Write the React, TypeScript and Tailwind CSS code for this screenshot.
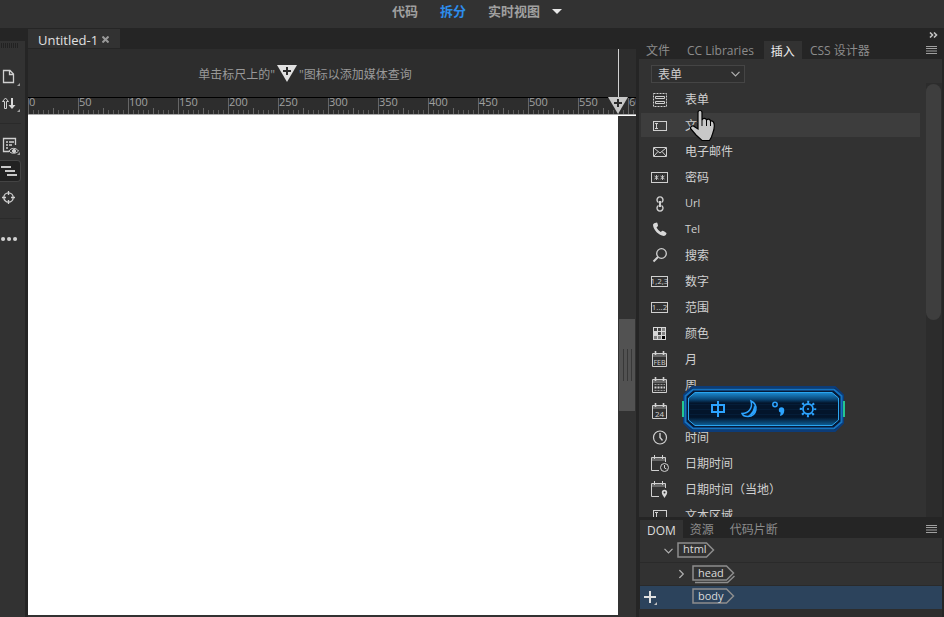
import type { ReactNode } from "react";

const Svg = ({ w = 24, h = 24, children }: { w?: number; h?: number; children: ReactNode }) => (
  <svg width={w} height={h} viewBox={`0 0 ${w} ${h}`} fill="none" stroke="#d0d0d0" strokeWidth="1" className="shrink-0" aria-hidden="true">
    {children}
  </svg>
);

const Chevron = () => (
  <svg width="9" height="6" viewBox="0 0 9 6" fill="none" stroke="#b0b0b0" strokeWidth="1.2" aria-hidden="true">
    <path d="M0.5 0.8 4.5 4.8 8.5 0.8" />
  </svg>
);

const MediaPin = ({ fill = "#e0e0e0" }: { fill?: string }) => (
  <svg width="20" height="17" viewBox="0 0 20 17" className="shrink-0" aria-hidden="true">
    <path d="M0 0H20L10 17Z" fill={fill} />
    <path d="M10 2V10M6 6H14" stroke="#2d2d2d" strokeWidth="2" />
  </svg>
);

const MenuLines = () => (
  <svg width="11" height="8" viewBox="0 0 11 8" stroke="#a0a0a0" aria-hidden="true">
    <path d="M0 .5H11M0 2.5H11M0 5H11M0 7.5H11" />
  </svg>
);

const Calendar = ({ children }: { children?: ReactNode }) => (
  <g>
    <rect x="5" y="7" width="13" height="3" fill="#666" stroke="none" />
    <path d="M4.5 6.5H18.5V19.5H4.5Z" />
    <path d="M7.5 4V8M15.5 4V8" strokeWidth="1.6" />
    {children}
  </g>
);

const openCalendar = (
  <g>
    <rect x="4" y="7" width="13" height="3" fill="#666" stroke="none" />
    <path d="M17.5 11V6.5H3.5V19.5H11M6.5 4V8M14.5 4V8" />
  </g>
);

const IconText = ({ y, size, children }: { y: number; size: number; children: string }) => (
  <text x="11.5" y={y} textAnchor="middle" fontFamily="Open Sans, Noto Sans, sans-serif" fontSize={size} fill="#d0d0d0" stroke="none">
    {children}
  </text>
);

const icons: Record<string, ReactNode> = {
  form: (
    <>
      <rect x="5.5" y="6.5" width="13" height="13" strokeDasharray="2 1" />
      <path d="M7.5 9.5H16.5V11.5H7.5ZM7.5 14.5H16.5V16.5H7.5Z" />
    </>
  ),
  text: (
    <>
      <rect x="5.5" y="8.5" width="13" height="9" />
      <path d="M7 10.5H10M8.5 10.5V15.5M7 15.5H10" />
    </>
  ),
  mail: <path d="M5.5 8.5H18.5V17.5H5.5ZM6 9L12 14 18 9M6 17L10 12.5M18 17L14 12.5" />,
  password: (
    <>
      <rect x="3.5" y="7.5" width="16" height="10" />
      <path d="M8.5 10V15M6.5 11 10.5 14M10.5 11 6.5 14M14.5 10V15M12.5 11 16.5 14M16.5 11 12.5 14" strokeWidth=".9" />
    </>
  ),
  url: (
    <>
      <path d="M10.5 11.5A3 3 0 1 1 13.5 11.5M10.5 14.5A3 3 0 1 0 13.5 14.5" strokeWidth="1.4" />
      <path d="M12 10V16" strokeWidth="2" />
    </>
  ),
  tel: (
    <path
      d="M7 6 9 5.5C9.6 6.5 10 8 10 9L8.5 10.6C9.5 12.5 11 14 12.7 15L14.3 13.7C15.8 14 17 14.8 18.5 16 18.5 17.5 17.5 18.7 16 19 10.5 18.5 5.500 13 5 8 5 7 6 6.3 7 6Z"
      fill="#d8d8d8"
      stroke="none"
    />
  ),
  search: (
    <>
      <circle cx="13.5" cy="10.5" r="4.8" strokeWidth="1.3" />
      <path d="M10 14 5.5 18.5" strokeWidth="2" />
    </>
  ),
  number: (
    <>
      <rect x="3.5" y="7.5" width="16" height="10" />
      <IconText y={15} size={8}>1,2,3</IconText>
    </>
  ),
  range: (
    <>
      <rect x="3.5" y="7.5" width="16" height="10" />
      <IconText y={15} size={8}>1...2</IconText>
    </>
  ),
  color: (
    <>
      <path d="M5 6H18V19H5Z" fill="#d8d8d8" stroke="none" />
      <path d="M6 7H9V10H6ZM10 7H13V10H10ZM10 11H13V14H10Z" fill="#404040" stroke="none" />
      <path d="M14 7H17V10H14ZM6 15H9V18H6ZM10 15H13V18H10ZM14 11H17V14H14Z" fill="#808080" stroke="none" />
      <path d="M14 15H17V18H14Z" fill="#000" stroke="none" />
    </>
  ),
  month: (
    <Calendar>
      <IconText y={18} size={7}>FEB</IconText>
    </Calendar>
  ),
  week: (
    <Calendar>
      <path d="M6.5 11.5H17M6.5 17.5H17" strokeDasharray="2 1" stroke="#999" />
      <path d="M6.5 14.5H17" strokeDasharray="2 1" strokeWidth="2" />
    </Calendar>
  ),
  date: (
    <Calendar>
      <IconText y={18} size={8}>24</IconText>
    </Calendar>
  ),
  time: (
    <>
      <circle cx="12" cy="12.500" r="6.500" strokeWidth="1.2" />
      <path d="M12 8V12.500L14.500 15.500" strokeWidth="1.4" />
    </>
  ),
  datetime: (
    <>
      {openCalendar}
      <circle cx="16.5" cy="16.5" r="4" />
      <path d="M16.5 14V17L18.5 18" />
    </>
  ),
  local: (
    <>
      {openCalendar}
      <path d="M16.5 21C15 18.5 13.8 17.5 13.8 15.5A2.7 2.7 0 0 1 19.2 15.5C19.2 17.5 18 18.5 16.5 21Z" fill="#d8d8d8" stroke="none" />
      <circle cx="16.5" cy="15.5" r="1" fill="#333" stroke="none" />
    </>
  ),
  area: (
    <>
      <rect x="5.5" y="7.5" width="13" height="12" />
      <path d="M7 9.5H10M8.5 9.5V14.5M7 14.5H10" />
    </>
  ),
};

const items: [string, string][] = [
  ["form", "表单"],
  ["text", "文本"],
  ["mail", "电子邮件"],
  ["password", "密码"],
  ["url", "Url"],
  ["tel", "Tel"],
  ["search", "搜索"],
  ["number", "数字"],
  ["range", "范围"],
  ["color", "颜色"],
  ["month", "月"],
  ["week", "周"],
  ["date", "日期"],
  ["time", "时间"],
  ["datetime", "日期时间"],
  ["local", "日期时间（当地）"],
  ["area", "文本区域"],
];

function TopBar() {
  return (
    <header className="flex h-7 shrink-0 items-start justify-center bg-[#323232] pt-0.5 pl-2.5 text-[13px] leading-[19px] font-bold text-[#a0a0a0]">
      <nav className="flex items-center gap-[22px]">
        <button>代码</button>
        <button className="text-[#2d8ceb]">拆分</button>
        <button className="flex items-center gap-3">
          实时视图
          <svg width="10" height="5" viewBox="0 0 10 5" aria-hidden="true"><path d="M0 0H10L5 5Z" fill="#e8e8e8" /></svg>
        </button>
      </nav>
    </header>
  );
}

function ToolRail() {
  return (
    <aside className="flex w-[25px] shrink-0 flex-col pt-[13px]">
      <div className="flex flex-1 flex-col bg-[#323232]">
        <div className="flex h-5 pt-0.5 pl-px">
          <svg width="18" height="5" viewBox="0 0 18 5" aria-hidden="true"><path d="M0 2.5H18" stroke="#222" strokeWidth="5" strokeDasharray="1 1" /></svg>
        </div>
        <button aria-label="打开文档" className="h-7">
          <Svg>
            <path d="M3.5 7.5H10L13.5 11V19.5H3.5ZM9.5 7.5V11.5H13.5" strokeWidth="1.3" />
            <path d="M20 20V23H17Z" fill="#a0a0a0" stroke="none" />
          </Svg>
        </button>
        <button aria-label="文件管理" className="h-7">
          <Svg>
            <path d="M5.5 7 8.5 10.5H6.5V17.5H4.5V10.5H2.5Z" />
            <path d="M11 7H13V14H15.5L12 18 8.5 14H11Z" fill="#d8d8d8" stroke="none" />
            <path d="M20 18V21H17Z" fill="#a0a0a0" stroke="none" />
          </Svg>
        </button>
        <hr className="mt-1.5 mr-1 border-[#2a2a2a]" />
        <button aria-label="实时视图选项" className="mt-2 h-7">
          <Svg>
            <path d="M9 17.5H3.5V4.5H15.5V11" strokeWidth="1.3" />
            <path d="M6 8H8M9 8H14M6 11H8M9 11H12M6 14H8" strokeWidth="1.3" />
            <path d="M9 17C11 13.5 16 13.5 18.5 17 16 20 11 20 9 17Z" />
            <circle cx="14" cy="17" r="1.6" fill="#d0d0d0" />
            <path d="M20 18V21H17Z" fill="#a0a0a0" stroke="none" />
          </Svg>
        </button>
        <button aria-label="检查" className="mr-1 h-[22px] rounded-r-sm border border-l-0 border-[#444] bg-[#222]">
          <Svg h={20}><path d="M1 6H11M5 10H15M7 14H17" stroke="#c8c8c8" strokeWidth="2" /></Svg>
        </button>
        <button aria-label="定位" className="mt-1 h-6">
          <Svg>
            <circle cx="8.500" cy="11.500" r="4.700" strokeWidth="1.3" />
            <path d="M8.5 5V9M8.5 14V18M2 11.5H6M11 11.5H15" strokeWidth="1.3" />
          </Svg>
        </button>
        <hr className="mt-2 mr-1 border-[#2a2a2a]" />
        <button aria-label="自定义工具栏" className="mt-2 h-6">
          <Svg><path d="M3 12H3.100M9 12H9.100M15 12H15.100" strokeWidth="4" strokeLinecap="round" /></Svg>
        </button>
      </div>
    </aside>
  );
}

function Ruler() {
  return (
    <div className="flex h-[18px] overflow-x-clip border-t border-b border-t-black border-b-[#aaa] bg-[#2d2d2d]">
      {Array.from({ length: 13 }, (_, n) => (
        <div key={n} className="flex w-[50px] shrink-0 flex-col justify-between border-l border-[#666]">
          <span className="text-[11px] leading-[8px] text-[#a0a0a0]">{n * 50}</span>
          <div className="flex items-end">
            {Array.from({ length: 9 }, (_, t) => (
              <i key={t} className={t === 4 ? "ml-1 h-1.5 w-px bg-[#666]" : "ml-1 h-1 w-px bg-[#5a5a5a]"} />
            ))}
          </div>
        </div>
      ))}
    </div>
  );
}

function DocumentPane() {
  return (
    <main className="ml-[3px] flex min-w-0 flex-1 flex-col pt-px">
      <div className="flex h-5 items-start">
        <div className="flex h-[19px] w-[92px] items-center gap-1 bg-[#323232] pt-0.5 pl-2.5 text-[#e0e0e0]">
          <span className="text-[13px] leading-4">Untitled-1</span>
          <button aria-label="关闭">
            <svg width="7" height="7" viewBox="0 0 7 7" aria-hidden="true"><path d="M.5 .5 6.5 6.5M6.5 .5 .5 6.5" stroke="#999" strokeWidth="2" /></svg>
          </button>
        </div>
      </div>
      <div className="relative">
        <div className="flex h-12 items-center justify-center gap-0.5 bg-[#2d2d2d] pr-[54px] text-[12px] text-[#999]">
          <span className="pt-[3px]">单击标尺上的"</span>
          <MediaPin />
          <span className="pt-[3px]">"图标以添加媒体查询</span>
        </div>
        <Ruler />
        <div className="absolute top-0 right-2 flex flex-col items-center">
          <div className="h-12 w-px bg-[#d0d0d0]" />
          <MediaPin fill="#c8c8c8" />
        </div>
      </div>
      <div className="flex flex-1 bg-[#323232]">
        <div className="mb-0.5 flex-1 bg-white" />
        <div className="flex w-[18px] flex-col border-t border-white">
          <div className="mt-[203px] ml-px flex h-[92px] w-4 items-center justify-center gap-[3px] bg-[#525252]">
            <i className="h-8 w-px bg-[#383838]" />
            <i className="h-8 w-px bg-[#383838]" />
            <i className="h-8 w-px bg-[#383838]" />
          </div>
        </div>
      </div>
    </main>
  );
}

function ImeBar() {
  return (
    <div className="absolute top-[358px] left-[43px] h-[46px] w-[163px]">
      <svg width="163" height="46" viewBox="0 0 163 46" fill="none" aria-hidden="true">
        <defs>
          <linearGradient id="ime" x1="0" y1="0" x2="0" y2="1">
            <stop offset="0" stopColor="#1c8ad0" />
            <stop offset=".2" stopColor="#0a4a7c" />
            <stop offset=".32" stopColor="#03152b" />
            <stop offset=".75" stopColor="#03152b" />
            <stop offset="1" stopColor="#0d5f98" />
          </linearGradient>
        </defs>
        <path d="M10 1H153L161 9V37L153 45H10L2 37V9Z" fill="#061a38" stroke="#0c3c78" strokeWidth="2" />
        <path d="M11 3.5H152L159.5 10V36L152 42.5H11L3.5 36V10Z" stroke="#1672bf" strokeWidth="2" />
        <path d="M13 6.5H150L156.500 12V34L150 39.5H13L6.5 34V12Z" fill="url(#ime)" stroke="#2ba5ee" />
        <path d="M8 18.5H155M8 23.5H155M8 28.5H155" stroke="#0a2c4c" strokeWidth=".4" />
        <path d="M1 15V31M162 15V31" stroke="#24c78f" strokeWidth="2" />
        <path d="M30 19H42V26H30ZM36 15V31" stroke="#2ca4ff" strokeWidth="2" />
        <path d="M69 15C77 19 75 30 66 30.5 63 30.5 60.5 29 60 27.5 67 27 71 22 69 15Z" stroke="#2ca4ff" strokeWidth="1.5" />
        <path d="M72 19C76 24 72 30 66 30 70 27 72 23 72 19Z" fill="#2ca4ff" />
        <circle cx="93" cy="18.5" r="2.2" stroke="#2ca4ff" strokeWidth="1.5" />
        <circle cx="99.5" cy="24" r="2.7" fill="#2ca4ff" />
        <path d="M102.2 24C102.5 27 101 29.5 98 30L99 25Z" fill="#2ca4ff" />
        <circle cx="126" cy="23" r="5" stroke="#2ca4ff" strokeWidth="1.8" />
        <circle cx="126" cy="23" r="7" stroke="#2ca4ff" strokeWidth="2.5" strokeDasharray="2 3.498" strokeDashoffset="1" />
        <circle cx="126" cy="23" r="1" fill="#2ca4ff" />
      </svg>
    </div>
  );
}

function Hand() {
  return (
    <svg width="26" height="34" viewBox="0 0 26 34" className="absolute top-[81px] left-[50px]" aria-hidden="true">
      <path
        d="M9 15V3.5C9 .8 13 .8 13 3.5V11C14 8.800 17 9 17.500 11 19 9.500 21 10 21.500 12 24.500 11.500 25.300 14 25.300 17 25.300 22 23.500 24 22.500 28L20.500 31.500H13L7 26 1.500 19.500C1 17 4 16 6 18L9 20Z"
        fill="#c8c8c8"
        stroke="#000"
        strokeWidth="1.2"
      />
      <path d="M13 11V17M17.5 11V17M21.5 12V17" stroke="#000" />
    </svg>
  );
}

function InsertPanel() {
  return (
    <section className="relative flex min-h-0 flex-1 flex-col">
      <div className="flex h-[13px] shrink-0 items-center justify-end pr-1">
        <button aria-label="折叠面板">
          <svg width="9" height="6" viewBox="0 0 9 6" fill="none" stroke="#c0c0c0" strokeWidth="1.6" aria-hidden="true"><path d="M1 .5 3.5 3 1 5.5M5 .5 7.5 3 5 5.5" /></svg>
        </button>
      </div>
      <div className="flex h-[18px] shrink-0 items-center pl-px text-[12px] text-[#8c8c8c]">
        <button className="px-1.5 pt-0.5">文件</button>
        <button className="pt-0.5 pr-2.5 pl-[11px] whitespace-nowrap">CC Libraries</button>
        <button className="h-full bg-[#323232] px-[7px] pt-0.5 text-[#eee]">插入</button>
        <button className="px-2 pt-0.5 whitespace-nowrap">CSS 设计器</button>
        <button aria-label="面板菜单" className="mr-[5px] ml-auto"><MenuLines /></button>
      </div>
      <div className="flex min-h-0 flex-1 flex-col overflow-hidden bg-[#323232]">
        <div className="flex h-6 shrink-0 items-end pl-3">
          <label className="relative flex h-[18px] w-[94px] items-center">
            <select aria-label="类别" className="h-full w-full appearance-none border border-[#454545] bg-[#2f2f2f] pt-px pl-1.5 text-[12px] leading-4 text-[#d0d0d0]">
              <option>表单</option>
            </select>
            <span className="pointer-events-none absolute right-[5px]"><Chevron /></span>
          </label>
        </div>
        <div className="flex min-h-0 flex-1">
          <ul className="min-w-0 flex-1 overflow-hidden pt-1 pr-1.5 pl-0.5">
            {items.map(([icon, label]) => (
              <li key={icon} className="mb-0.5">
                <button className={icon === "text" ? "flex h-6 w-full items-center gap-[13px] bg-[#3d3d3d] pl-[7px]" : "flex h-6 w-full items-center gap-[13px] pl-[7px]"}>
                  <Svg>{icons[icon]}</Svg>
                  <span className={label.length === 3 ? "text-[11px] leading-4 text-[#d0d0d0]" : "pt-0.5 text-[12px] leading-4 text-[#d0d0d0]"}>{label}</span>
                </button>
              </li>
            ))}
          </ul>
          <div className="flex w-4 bg-[#2c2c2c] py-px pr-px">
            <div className="h-[236px] w-full rounded-full bg-[#3e3e3e]" />
          </div>
        </div>
      </div>
      <Hand />
      <ImeBar />
    </section>
  );
}

function Tag({ name, stacked = false }: { name: string; stacked?: boolean }) {
  return (
    <span className="relative flex h-[19px] items-center">
      {name === "html" ? (
        <svg width="38" height="19" viewBox="0 0 38 19" fill="none" stroke="#8d8d8d" strokeWidth="1.5" aria-hidden="true">
          <path d="M1 2H29.5L36.5 9 29.5 16H1Z" />
        </svg>
      ) : (
        <svg width="43" height="19" viewBox="0 0 43 19" fill="none" stroke="#8d8d8d" strokeWidth="1.5" aria-hidden="true">
          <path d="M1 1H34.5L41.5 8 34.5 15H1Z" />
          {stacked && <path d="M3 17.500H35.500L42.500 11" />}
        </svg>
      )}
      <span className="absolute left-1.5 pb-[3px] text-[11px] leading-4 text-[#dadada]">{name}</span>
    </span>
  );
}

function DomPanel() {
  return (
    <section className="shrink-0 pt-[3px]">
      <div className="flex h-[18px] items-center text-[12px] text-[#8c8c8c]">
        <button className="mr-[7px] ml-px h-full bg-[#323232] px-[7px] pt-0.5 text-[#ddd]">DOM</button>
        <button className="mr-4 pt-0.5">资源</button>
        <button className="pt-0.5">代码片断</button>
        <button aria-label="面板菜单" className="mr-[5px] ml-auto"><MenuLines /></button>
      </div>
      <div className="ml-px bg-[#323232] pt-px">
        <div className="flex h-6 items-center gap-1 border-b border-[#2a2a2a] pl-6">
          <Chevron />
          <Tag name="html" />
        </div>
        <div className="flex h-[23px] items-center gap-1.5 border-b border-[#2a2a2a] pl-[37px]">
          <span className="flex w-[9px] -rotate-90"><Chevron /></span>
          <Tag name="head" stacked />
        </div>
        <div className="flex h-[23px] items-center gap-[34px] bg-[#2c435c] pl-1">
          <button aria-label="添加元素">
            <svg width="14" height="14" viewBox="0 0 14 14" aria-hidden="true">
              <path d="M6 0V12M0 6H12" stroke="#e0e0e0" strokeWidth="2" />
              <path d="M13 11V14H10Z" fill="#c0c0c0" />
            </svg>
          </button>
          <Tag name="body" />
        </div>
      </div>
      <div className="h-2 bg-[#2d2d2d]" />
    </section>
  );
}

export default function App() {
  return (
    <div className="flex h-screen min-h-96 flex-col overflow-hidden bg-[#252525] font-['Open_Sans','Noto_Sans_CJK_SC',sans-serif]">
      <TopBar />
      <div className="flex min-h-0 flex-1">
        <ToolRail />
        <DocumentPane />
        <div className="mr-0.5 ml-[3px] flex w-[303px] shrink-0 flex-col">
          <InsertPanel />
          <DomPanel />
        </div>
      </div>
    </div>
  );
}
